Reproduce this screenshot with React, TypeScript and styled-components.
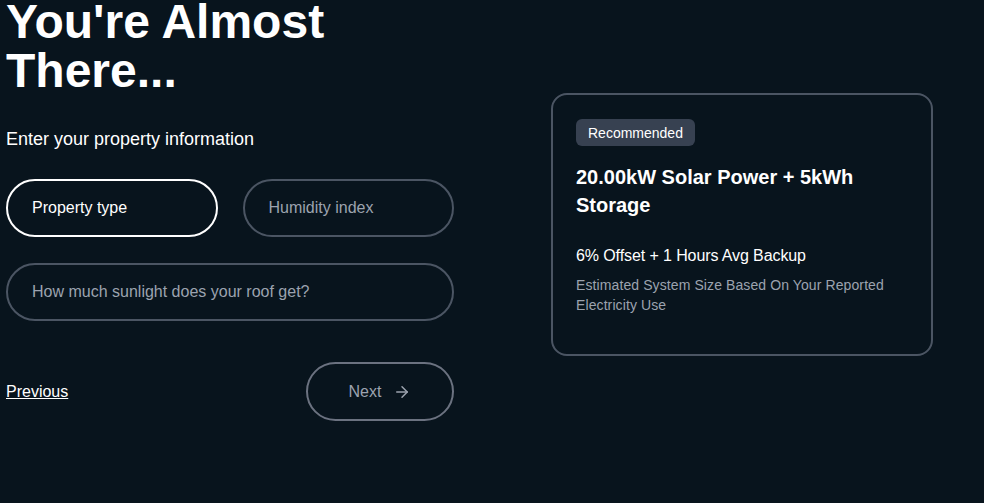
import React from "react";
import styled, { createGlobalStyle } from "styled-components";
import { ArrowRight } from "lucide-react";

const Global = createGlobalStyle`
  html, body { margin: 0; padding: 0; background: #08141d; }
  body { font-family: "Liberation Sans", Arial, sans-serif; color: #ffffff; overflow: hidden; }
  * { box-sizing: border-box; }
`;

const Page = styled.div`
  display: flex;
  align-items: flex-start;
  gap: 97px;
  padding: 0 6px;
  width: 984px;
  height: 503px;
`;

const Left = styled.div`
  width: 448px;
  display: flex;
  flex-direction: column;
`;

const Title = styled.h1`
  margin: -3px 0 0 0;
  font-size: 48px;
  line-height: 49px;
  font-weight: 700;
  color: #ffffff;
`;

const Subtitle = styled.p`
  margin: 30px 0 0 0;
  font-size: 18px;
  line-height: 28px;
  color: #ffffff;
`;

const Fields = styled.div`
  display: grid;
  grid-template-columns: 1fr 1fr;
  column-gap: 25px;
  row-gap: 26px;
  margin-top: 26px;
`;

const Field = styled.div<{ $active?: boolean; $wide?: boolean }>`
  grid-column: ${(p) => (p.$wide ? "1 / span 2" : "auto")};
  height: 58px;
  border-radius: 9999px;
  border: 2px solid ${(p) => (p.$active ? "#ffffff" : "#4b5563")};
  display: flex;
  align-items: center;
  padding: 0 24px;
  font-size: 16px;
  color: ${(p) => (p.$active ? "#ffffff" : "#9ca3af")};
`;

const Actions = styled.div`
  display: flex;
  justify-content: space-between;
  align-items: center;
  margin-top: 41px;
`;

const PrevLink = styled.a`
  font-size: 16px;
  color: #ffffff;
  text-decoration: underline;
  cursor: pointer;
`;

const NextButton = styled.button`
  width: 148px;
  height: 59px;
  border-radius: 9999px;
  border: 2px solid #6b7280;
  background: transparent;
  color: #9ca3af;
  font-family: "Liberation Sans", Arial, sans-serif;
  font-size: 16px;
  display: flex;
  align-items: center;
  justify-content: center;
  gap: 12px;
  padding: 0;
`;

const Card = styled.div`
  margin-top: 93px;
  width: 382px;
  height: 263px;
  border: 2px solid #4b5563;
  border-radius: 16px;
  padding: 24px 23px;
  display: flex;
  flex-direction: column;
  align-items: flex-start;
`;

const Badge = styled.span`
  background: #374151;
  border-radius: 6px;
  padding: 0 12px;
  height: 27px;
  display: inline-flex;
  align-items: center;
  font-size: 14px;
  color: #ffffff;
`;

const CardTitle = styled.h2`
  margin: 17px 0 0 0;
  font-size: 20px;
  line-height: 28px;
  font-weight: 700;
  color: #ffffff;
`;

const Offset = styled.p`
  margin: 25px 0 0 0;
  font-size: 16px;
  line-height: 24px;
  color: #ffffff;
  letter-spacing: -0.1px;
`;

const Note = styled.p`
  margin: 7px 0 0 0;
  font-size: 14px;
  line-height: 20px;
  color: #9ca3af;
  letter-spacing: 0.1px;
`;

export default function App() {
  return (
    <>
      <Global />
      <Page>
        <Left>
          <Title>
            You're Almost
            <br />
            There...
          </Title>
          <Subtitle>Enter your property information</Subtitle>
          <Fields>
            <Field $active>Property type</Field>
            <Field>Humidity index</Field>
            <Field $wide>How much sunlight does your roof get?</Field>
          </Fields>
          <Actions>
            <PrevLink>Previous</PrevLink>
            <NextButton>
              Next <ArrowRight size={18} strokeWidth={2} />
            </NextButton>
          </Actions>
        </Left>
        <Card>
          <Badge>Recommended</Badge>
          <CardTitle>20.00kW Solar Power + 5kWh Storage</CardTitle>
          <Offset>6% Offset + 1 Hours Avg Backup</Offset>
          <Note>Estimated System Size Based On Your Reported Electricity Use</Note>
        </Card>
      </Page>
    </>
  );
}
